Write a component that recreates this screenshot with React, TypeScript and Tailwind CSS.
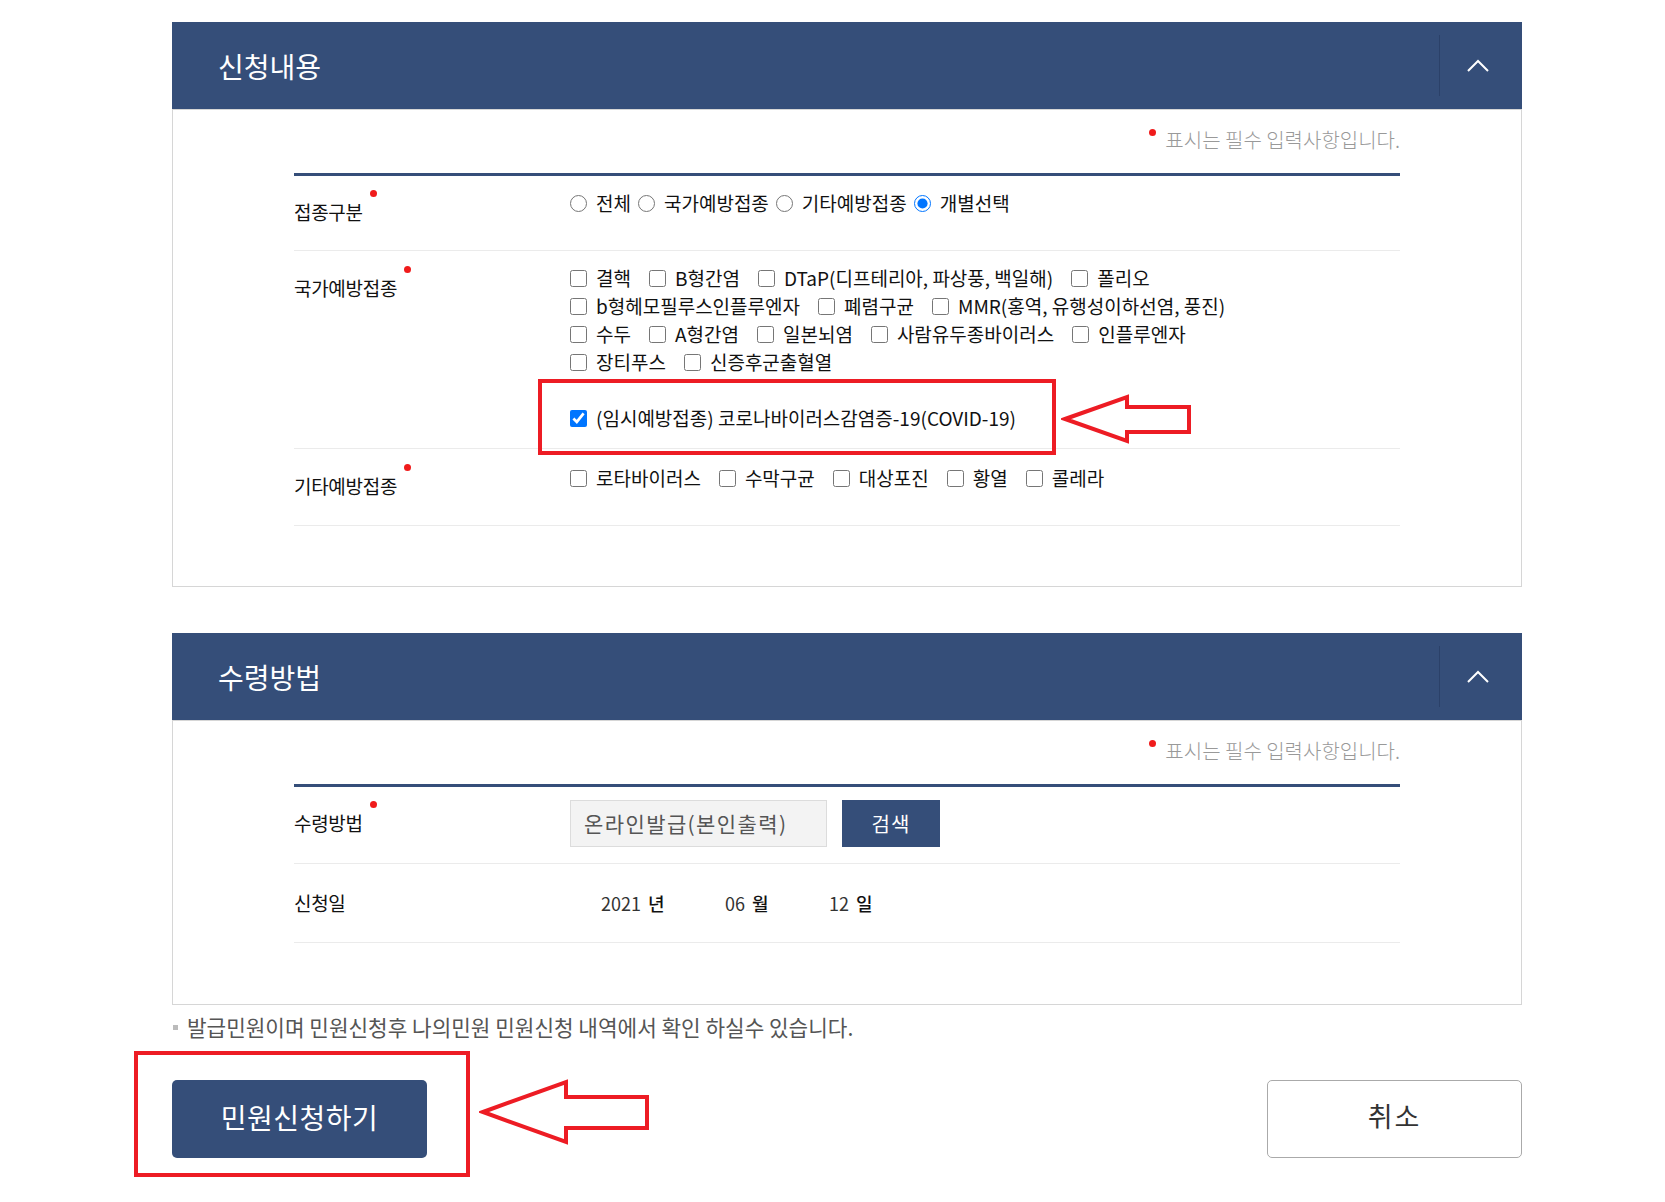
import React from "react";

const nationalRows = [
  ["결핵", "B형간염", "DTaP(디프테리아, 파상풍, 백일해)", "폴리오"],
  ["b형헤모필루스인플루엔자", "폐렴구균", "MMR(홍역, 유행성이하선염, 풍진)"],
  ["수두", "A형간염", "일본뇌염", "사람유두종바이러스", "인플루엔자"],
  ["장티푸스", "신증후군출혈열"],
];

const otherVaccines = ["로타바이러스", "수막구균", "대상포진", "황열", "콜레라"];

const kinds = ["전체", "국가예방접종", "기타예방접종", "개별선택"];

function Check({ label, checked }: { label: string; checked?: boolean }) {
  return (
    <label className="flex items-center whitespace-nowrap">
      <input type="checkbox" defaultChecked={checked} className="mr-[9px] h-[17px] w-[17px]" />
      {label}
    </label>
  );
}

function FieldLabel({ text, req, className }: { text: string; req?: boolean; className: string }) {
  return (
    <div className={`w-[276px] shrink-0 ${className}`}>
      <span className="relative inline-block text-[19px] leading-[26px] tracking-[-0.3px] text-[#111]">
        {text}
        {req && (
          <span className="absolute -right-[14px] -top-[9px] h-[7px] w-[7px] rounded-full bg-[#f01b1b]" />
        )}
      </span>
    </div>
  );
}

function PanelHeader({ title }: { title: string }) {
  return (
    <div className="flex h-[87px] items-center bg-[#354e79]">
      <h2 className="flex-1 pl-[46px] text-[28px] leading-none text-white">{title}</h2>
      <div className="flex h-[61px] w-[83px] items-center justify-center border-l border-[#2b4169] pr-[6px]">
        <svg width="22" height="13" viewBox="0 0 22 13">
          <path d="M1 12 L11 2 L21 12" stroke="white" strokeWidth="2" fill="none" />
        </svg>
      </div>
    </div>
  );
}

function RequiredNote() {
  return (
    <>
      <div className="mb-[21px] flex justify-end pt-[18px]">
        <span className="relative text-[20px] font-light leading-[24px] text-[#999]">
          <span className="absolute -left-[16px] top-[1px] h-[7px] w-[7px] rounded-full bg-[#f01b1b]" />
          표시는 필수 입력사항입니다.
        </span>
      </div>
      <div className="h-[3px] bg-[#354e79]" />
    </>
  );
}

export default function App() {
  return (
    <div className="relative min-h-[1202px] w-full bg-white pt-[22px] font-['Noto_Sans_CJK_KR','Noto_Sans',sans-serif] text-[#111]">
      <div className="ml-[172px] w-[1350px]">
        {/* 신청내용 */}
        <PanelHeader title="신청내용" />
        <div className="border border-[#d6d6d6] px-[121px] pb-[60px]">
          <RequiredNote />

          <div className="flex border-b border-[#ebebeb]">
            <FieldLabel text="접종구분" req className="pt-[23px]" />
            <div className="flex h-[74px] items-start gap-x-[7px] pt-[14px] text-[19px] leading-[26px]">
              {kinds.map((k, i) => (
                <label key={k} className="flex h-[26px] items-center whitespace-nowrap">
                  <input type="radio" name="kind" defaultChecked={i === 3} className="mr-[9px] h-[17px] w-[17px]" />
                  {k}
                </label>
              ))}
            </div>
          </div>

          <div className="flex border-b border-[#ebebeb]">
            <FieldLabel text="국가예방접종" req className="pt-[24px]" />
            <div className="pb-[16px] pt-[13px] text-[19px]">
              {nationalRows.map((row, i) => (
                <div key={i} className="flex h-[28px] items-center gap-x-[18px]">
                  {row.map((v) => (
                    <Check key={v} label={v} />
                  ))}
                </div>
              ))}
              <div className="mt-[28px] flex h-[28px] items-center">
                <Check label="(임시예방접종) 코로나바이러스감염증-19(COVID-19)" checked />
              </div>
            </div>
          </div>

          <div className="flex border-b border-[#ebebeb]">
            <FieldLabel text="기타예방접종" req className="pt-[24px]" />
            <div className="flex h-[76px] items-start gap-x-[18px] pt-[16px] text-[19px]">
              {otherVaccines.map((v) => (
                <div key={v} className="flex h-[26px] items-center">
                  <Check label={v} />
                </div>
              ))}
            </div>
          </div>
        </div>

        {/* 수령방법 */}
        <div className="mt-[46px]">
          <PanelHeader title="수령방법" />
        </div>
        <div className="border border-[#d6d6d6] px-[121px] pb-[61px]">
          <RequiredNote />

          <div className="flex border-b border-[#ebebeb]">
            <FieldLabel text="수령방법" req className="pt-[23px]" />
            <div className="flex gap-x-[15px] pb-[16px] pt-[13px]">
              <div className="flex h-[47px] w-[257px] items-center border border-[#dcdcdc] bg-[#f3f3f3] pl-[13px] text-[21px] tracking-[1.4px] text-[#555]">
                온라인발급(본인출력)
              </div>
              <button className="h-[47px] w-[98px] bg-[#354e79] text-[20px] tracking-[1px] text-white">
                검색
              </button>
            </div>
          </div>

          <div className="flex border-b border-[#ebebeb]">
            <FieldLabel text="신청일" className="pt-[26px]" />
            <div className="flex h-[78px] items-start pl-[31px] pt-[26px] text-[18px] leading-[26px]">
              <span className="w-[124px]">
                <span className="text-[#333]">2021</span>
                <span className="ml-[7px] font-medium">년</span>
              </span>
              <span className="w-[104px]">
                <span className="text-[#333]">06</span>
                <span className="ml-[7px] font-medium">월</span>
              </span>
              <span>
                <span className="text-[#333]">12</span>
                <span className="ml-[7px] font-medium">일</span>
              </span>
            </div>
          </div>
        </div>

        <div className="mt-[10px] flex h-[24px] items-center">
          <span className="ml-[1px] mr-[9px] h-[5px] w-[5px] bg-[#bbb]" />
          <span className="text-[21.3px] leading-[24px] text-[#555]">
            발급민원이며 민원신청후 나의민원 민원신청 내역에서 확인 하실수 있습니다.
          </span>
        </div>

        <div className="mt-[41px] flex justify-between">
          <button className="h-[78px] w-[255px] rounded-[5px] bg-[#354e79] pb-[5px] text-[28px] tracking-[0.5px] text-white">
            민원신청하기
          </button>
          <button className="h-[78px] w-[255px] rounded-[5px] border border-[#aaa] bg-white pb-[5px] text-[27px] tracking-[2px] text-[#333]">
            취소
          </button>
        </div>
      </div>

      {/* annotations */}
      <div className="pointer-events-none absolute left-[538px] top-[379px] h-[76px] w-[518px] border-4 border-[#ed1c24]" />
      <svg className="pointer-events-none absolute left-[1061px] top-[393px]" width="132" height="52" viewBox="0 0 132 52">
        <polygon
          points="4,26 66,4 66,14 128,14 128,39 66,39 66,48"
          fill="white"
          stroke="#ed1c24"
          strokeWidth="4"
        />
      </svg>
      <div className="pointer-events-none absolute left-[134px] top-[1051px] h-[126px] w-[336px] border-4 border-[#ed1c24]" />
      <svg className="pointer-events-none absolute left-[479px] top-[1078px]" width="172" height="68" viewBox="0 0 172 68">
        <polygon
          points="4,34 87,4 87,19 168,19 168,50 87,50 87,64"
          fill="white"
          stroke="#ed1c24"
          strokeWidth="4"
        />
      </svg>
    </div>
  );
}
